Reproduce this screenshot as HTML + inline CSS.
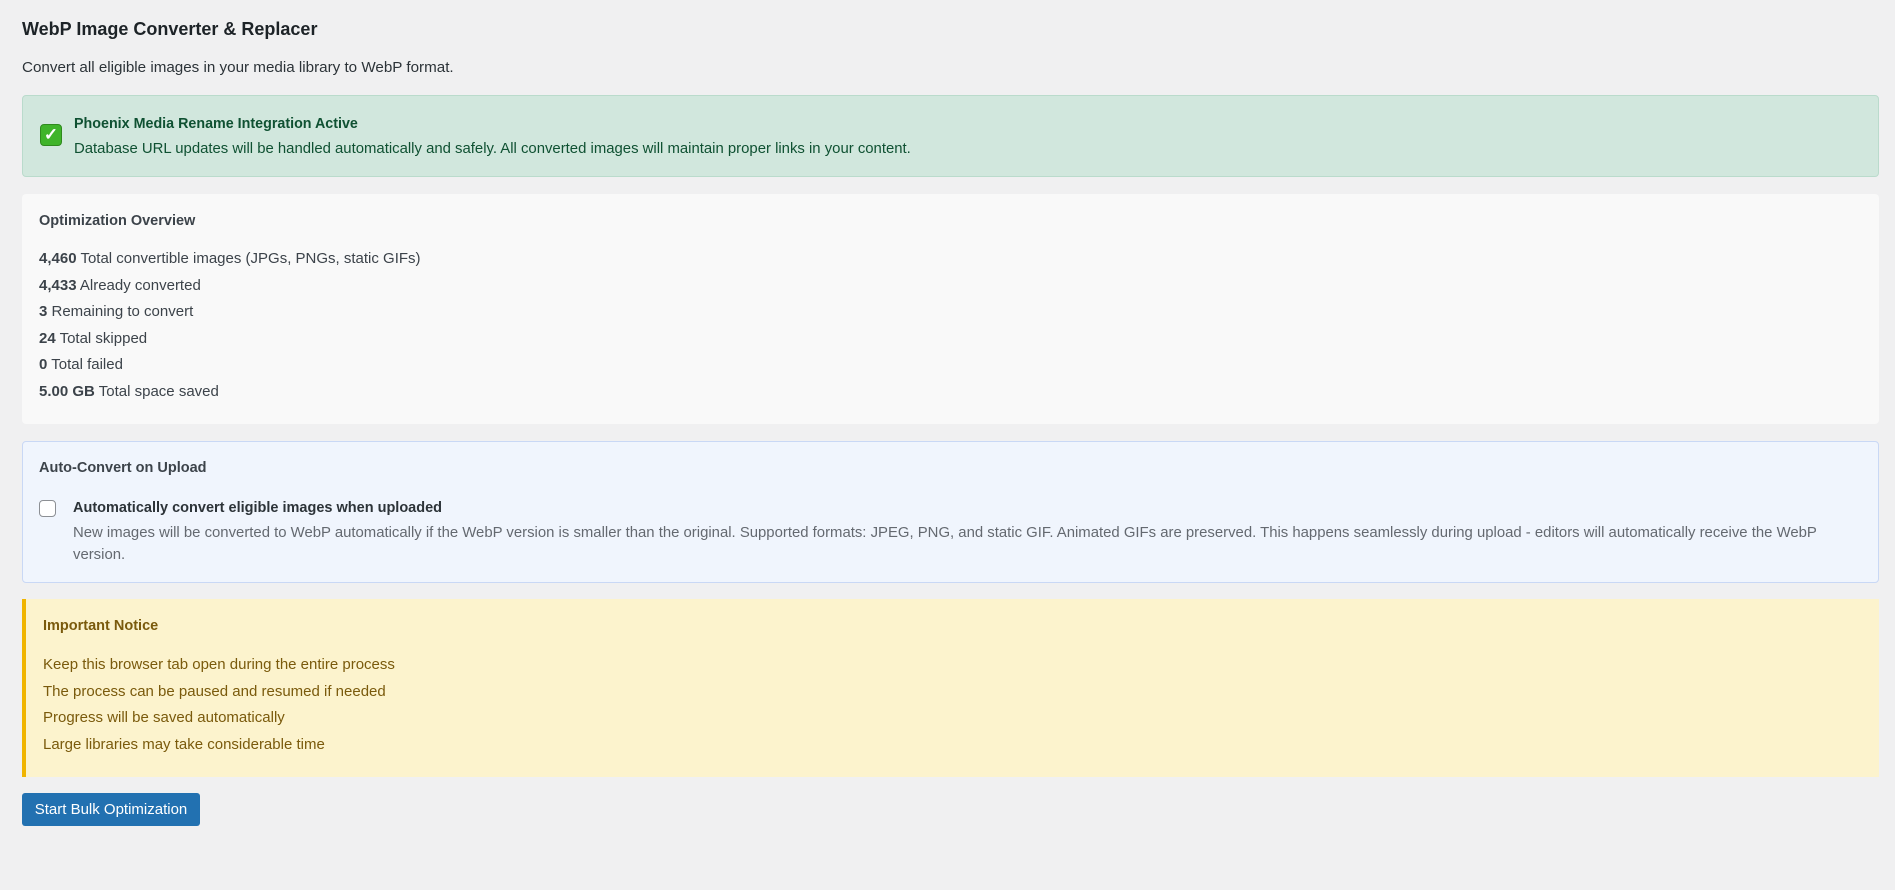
<!DOCTYPE html>
<html><head><meta charset="utf-8"><style>
*{box-sizing:border-box;margin:0;padding:0}
body{width:1895px;height:890px;background:#f0f0f1;font-family:"Liberation Sans",Arial,sans-serif;color:#1d2327;position:relative;overflow:hidden;font-size:15px}
.a{position:absolute;white-space:nowrap}
.box{position:absolute;left:22px;width:1857px;border-radius:4px}
</style></head><body>
<div class="a" style="left:22px;top:17px;font-size:18px;font-weight:600;line-height:24px;color:#1d2327">WebP Image Converter &amp; Replacer</div>
<div class="a" style="left:22px;top:59px;line-height:18px;color:#2c3338;font-size:15.2px">Convert all eligible images in your media library to WebP format.</div>

<div class="box" style="top:95px;height:82px;background:#d1e7dd;border:1px solid #badbcc"></div>
<div class="a" style="left:40px;top:124px;width:22px;height:22px;background:#3fb42a;border-radius:4px;border:1px solid #2f8a1e;color:#fff;font-size:17px;line-height:20px;text-align:center;font-weight:bold">✓</div>
<div class="a" style="left:74px;top:115px;line-height:18px;font-weight:bold;color:#0f5132;font-size:14.3px">Phoenix Media Rename Integration Active</div>
<div class="a" style="left:74px;top:140px;line-height:18px;color:#0f5132;font-size:14.9px">Database URL updates will be handled automatically and safely. All converted images will maintain proper links in your content.</div>

<div class="box" style="top:194px;height:230px;background:#f9f9f9"></div>
<div class="a" style="left:39px;top:212px;line-height:18px;font-weight:bold;font-size:14.5px;color:#3c434a">Optimization Overview</div>
<div class="a" style="left:39px;top:250px;line-height:18px;color:#3c434a"><b>4,460</b> Total convertible images (JPGs, PNGs, static GIFs)</div>
<div class="a" style="left:39px;top:277px;line-height:18px;color:#3c434a"><b>4,433</b> Already converted</div>
<div class="a" style="left:39px;top:303px;line-height:18px;color:#3c434a"><b>3</b> Remaining to convert</div>
<div class="a" style="left:39px;top:330px;line-height:18px;color:#3c434a"><b>24</b> Total skipped</div>
<div class="a" style="left:39px;top:356px;line-height:18px;color:#3c434a"><b>0</b> Total failed</div>
<div class="a" style="left:39px;top:383px;line-height:18px;color:#3c434a"><b>5.00 GB</b> Total space saved</div>

<div class="box" style="top:441px;height:142px;background:#f0f5fd;border:1px solid #c9d8f5"></div>
<div class="a" style="left:39px;top:459px;line-height:18px;font-weight:bold;font-size:14.5px;color:#3c434a">Auto-Convert on Upload</div>
<div class="a" style="left:39px;top:500px;width:17px;height:17px;border:1px solid #8c8f94;border-radius:4px;background:#fff"></div>
<div class="a" style="left:73px;top:499px;line-height:18px;font-weight:bold;font-size:14.5px;color:#2c3338">Automatically convert eligible images when uploaded</div>
<div class="a" style="left:73px;top:523px;line-height:21.5px;color:#646970;font-size:14.9px">New images will be converted to WebP automatically if the WebP version is smaller than the original. Supported formats: JPEG, PNG, and static GIF. Animated GIFs are preserved. This happens seamlessly during upload - editors will automatically receive the WebP<br>version.</div>

<div class="box" style="top:599px;height:178px;background:#fcf3cd;border-left:4px solid #f0b400;border-radius:0"></div>
<div class="a" style="left:43px;top:617px;line-height:18px;font-weight:bold;font-size:14.5px;color:#7a5a0c">Important Notice</div>
<div class="a" style="left:43px;top:656px;line-height:18px;color:#7a5a0c">Keep this browser tab open during the entire process</div>
<div class="a" style="left:43px;top:683px;line-height:18px;color:#7a5a0c">The process can be paused and resumed if needed</div>
<div class="a" style="left:43px;top:709px;line-height:18px;color:#7a5a0c">Progress will be saved automatically</div>
<div class="a" style="left:43px;top:736px;line-height:18px;color:#7a5a0c">Large libraries may take considerable time</div>

<div class="a" style="left:22px;top:793px;width:178px;height:33px;background:#2271b1;border-radius:3px;color:#fff;font-size:15px;line-height:33px;text-align:center">Start Bulk Optimization</div>
</body></html>
